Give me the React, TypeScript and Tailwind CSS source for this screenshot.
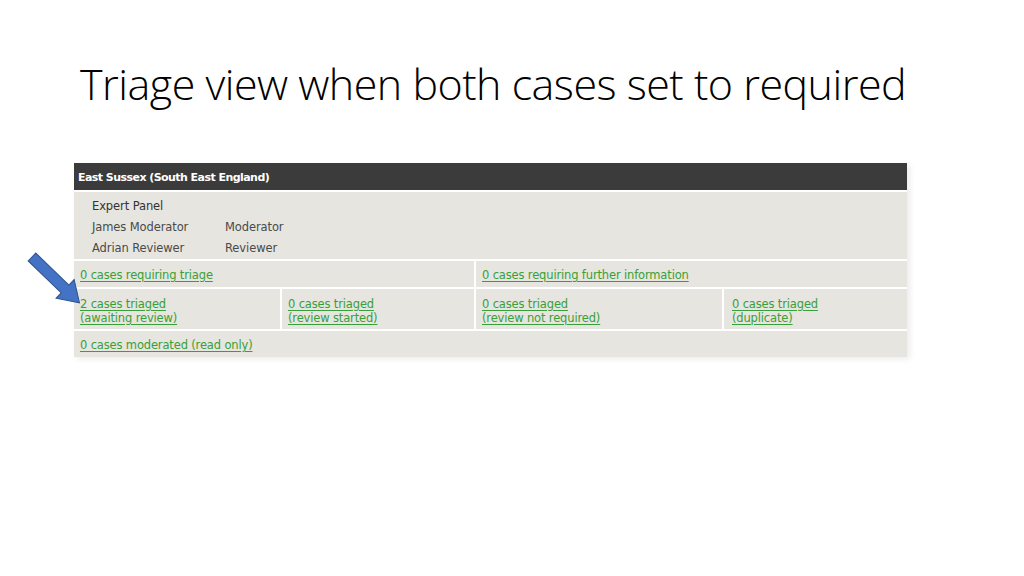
import React from 'react';

const linkClass =
  'text-[#38a038] underline underline-offset-[2px] decoration-[1px] leading-[14px]';

function Arrow() {
  // blue block arrow pointing down-right at the "awaiting review" cell
  return (
    <svg
      className="absolute left-[26px] top-[252px]"
      width="58"
      height="56"
      viewBox="0 0 58 56"
    >
      <g transform="translate(6 5) rotate(44)">
        <path
          d="M0 -5.5 L46 -5.5 L46 -13 L66 0 L46 13 L46 5.5 L0 5.5 Z"
          fill="#4472c4"
          stroke="#2f528f"
          strokeWidth="1"
        />
      </g>
    </svg>
  );
}

export default function App() {
  return (
    <div className="relative w-[1024px] h-[576px] bg-white overflow-hidden">
      <h1 className="pl-[80px] pt-[57px] text-[43px] leading-[54px] font-light tracking-[-0.5px] text-black [font-family:'Open_Sans',sans-serif]">
        Triage view when both cases set to required
      </h1>

      <div className="ml-[74px] mt-[52px] w-[833px] flex flex-col gap-[2px] bg-white shadow-[3px_2px_6px_rgba(0,0,0,0.08)] [font-family:'DejaVu_Sans',sans-serif] text-[11.5px]">
        <div className="h-[27px] bg-[#3b3b3b] text-white text-[11px] font-bold flex items-center pl-[4px] pt-[3px] tracking-[-0.55px]">
          East Sussex (South East England)
        </div>

        <div className="h-[67px] bg-[#e6e5df] pl-[18px] pt-[4px] text-[#4a4a4a] tracking-[-0.1px]">
          <div className="h-[21px] flex items-center text-[#333]">Expert Panel</div>
          <div className="h-[21px] flex items-center">
            <span className="w-[133px]">James Moderator</span>
            <span>Moderator</span>
          </div>
          <div className="h-[21px] flex items-center">
            <span className="w-[133px]">Adrian Reviewer</span>
            <span>Reviewer</span>
          </div>
        </div>

        <div className="grid grid-cols-[206px_192px_246px_183px] gap-[2px] tracking-[-0.15px]">
          <div className="col-span-2 h-[26px] bg-[#e6e5df] flex items-center pl-[6px] pt-[1px]">
            <a className={linkClass}>0 cases requiring triage</a>
          </div>
          <div className="col-span-2 h-[26px] bg-[#e6e5df] flex items-center pl-[6px] pt-[1px]">
            <a className={linkClass}>0 cases requiring further information</a>
          </div>

          <div className="h-[40px] bg-[#e6e5df] flex flex-col justify-center pl-[6px] pt-[3px]">
            <a className={linkClass}>2 cases triaged</a>
            <a className={linkClass}>(awaiting review)</a>
          </div>
          <div className="h-[40px] bg-[#e6e5df] flex flex-col justify-center pl-[6px] pt-[3px]">
            <a className={linkClass}>0 cases triaged</a>
            <a className={linkClass}>(review started)</a>
          </div>
          <div className="h-[40px] bg-[#e6e5df] flex flex-col justify-center pl-[6px] pt-[3px]">
            <a className={linkClass}>0 cases triaged</a>
            <a className={linkClass}>(review not required)</a>
          </div>
          <div className="h-[40px] bg-[#e6e5df] flex flex-col justify-center pl-[8px] pt-[3px]">
            <a className={linkClass}>0 cases triaged</a>
            <a className={linkClass}>(duplicate)</a>
          </div>

          <div className="col-span-4 h-[26px] bg-[#e6e5df] flex items-center pl-[6px] pt-[1px]">
            <a className={linkClass}>0 cases moderated (read only)</a>
          </div>
        </div>
      </div>

      <Arrow />
    </div>
  );
}
